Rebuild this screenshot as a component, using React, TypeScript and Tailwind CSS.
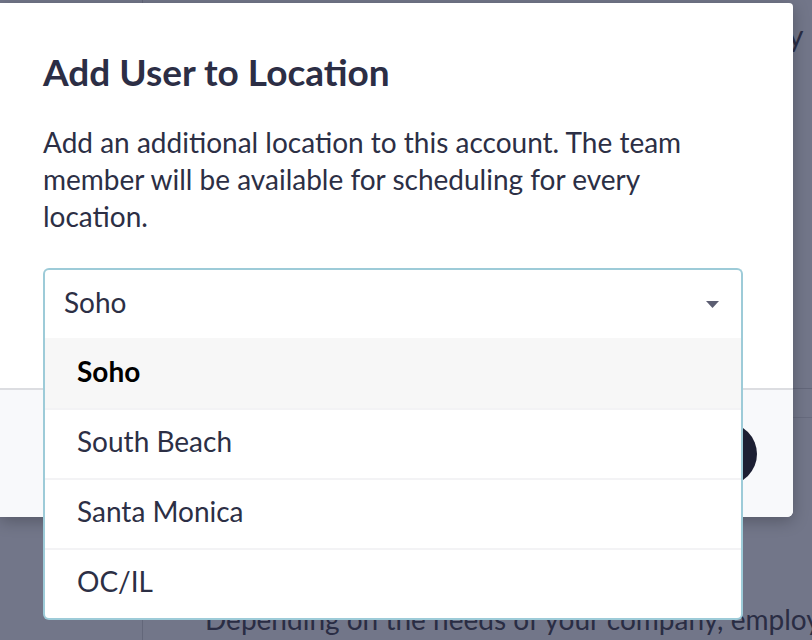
import React from 'react';

const font = { fontFamily: 'Lato, "Noto Sans", sans-serif' };

const locations = ['Soho', 'South Beach', 'Santa Monica', 'OC/IL'];

function Caret() {
  return (
    <svg width="13" height="7" viewBox="0 0 13 7" className="shrink-0">
      <path d="M0 0 L13 0 L6.5 7 Z" fill="#5c5e72" />
    </svg>
  );
}

export default function App() {
  return (
    <div className="relative w-[812px] h-[640px] overflow-hidden bg-[#727689] text-[#2c2f45]" style={font}>
      {/* page under the overlay */}
      <div className="flex h-full">
        <div className="w-[143px] shrink-0 border-r border-[#63677a]" />
        <div className="flex min-w-0 flex-1 flex-col overflow-hidden">
          <div className="h-[84px] pt-[18px] pl-[638px] text-[30px] leading-[34px] text-[#2a2d44]">ly</div>
          <div className="h-[306px] border-b border-[#63677a]" />
          <div className="h-[29px] border-b border-[#676b7e]" />
          <div className="flex-1 pt-[180px] pl-[62px] text-[28px] whitespace-nowrap text-[#2a2d44]">
            Depending on the needs of your company, employees
          </div>
        </div>
      </div>

      {/* modal */}
      <div className="absolute left-0 top-[3px] flex h-[514px] w-[793px] flex-col rounded-br-md rounded-tr-sm bg-white shadow-[0_4px_16px_rgba(0,0,0,0.25)]">
        <div className="relative h-[385px] px-[43px] pt-[47px]">
          <h1 className="text-[37px] font-bold leading-[44px] text-[#2c2e45]">Add User to Location</h1>
          <p className="mt-[30px] w-[690px] text-[28px] leading-[37px] text-[#2c2f45]">
            Add an additional location to this account. The team member will be available for scheduling for every
            location.
          </p>
        </div>
        <div className="flex flex-1 items-center justify-end rounded-br-md border-t-2 border-[#dcdde1] bg-[#f8f9fb] pr-[36px]">
          <div className="h-[62px] w-[140px] rounded-full bg-[#1c1f33]" />
        </div>
      </div>

      {/* open select */}
      <div className="absolute left-[43px] top-[268px] w-[700px]">
        <div className="flex h-[70px] items-center justify-between rounded-t-md border-2 border-b-0 border-[#9dcbd8] bg-white pl-[19px] pr-[22px]">
          <span className="pb-[5px] text-[28px] text-[#2c2f45]">Soho</span>
          <Caret />
        </div>
        <ul className="overflow-hidden rounded-b-md border-2 border-t-0 border-[#9dcbd8] bg-white">
          {locations.map((loc, i) => (
            <li
              key={loc}
              className={
                i === 0
                  ? 'flex h-[70px] items-center bg-[#f7f7f7] pb-[5px] pl-[32px] text-[28px] font-bold text-black'
                  : 'flex h-[70px] items-center border-t-2 border-[#f3f3f5] pb-[6px] pl-[32px] text-[28px] text-[#2c2f45]'
              }
            >
              {loc}
            </li>
          ))}
        </ul>
      </div>
    </div>
  );
}
